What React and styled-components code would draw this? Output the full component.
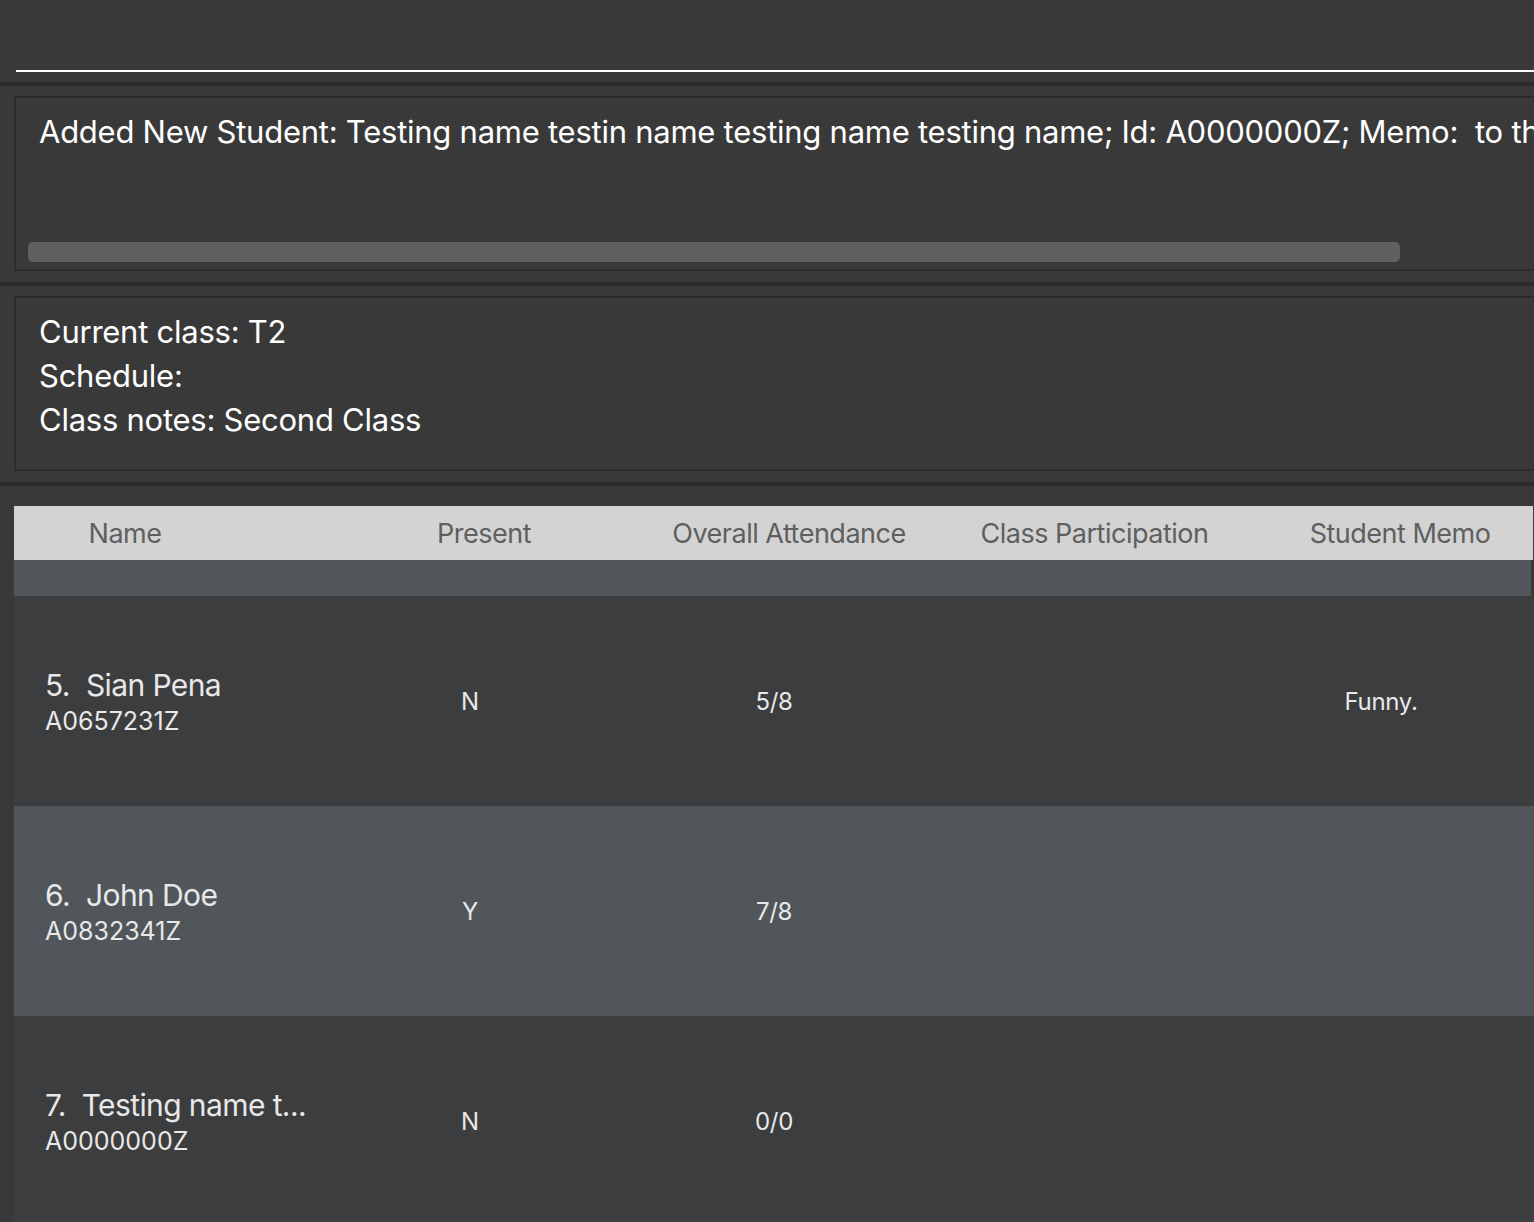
import React from 'react';
import styled, { createGlobalStyle } from 'styled-components';

const GlobalStyle = createGlobalStyle`
  html, body {
    margin: 0;
    padding: 0;
    background: #393939;
    overflow: hidden;
  }
  body {
    font-family: Inter, "Noto Sans", sans-serif;
  }
`;

// column tracks shared by header and rows
const TRACKS = '316px 280px 328px 293px 300px';

const COLUMNS = [
  { title: 'Name', shift: -47 },
  { title: 'Present', shift: 14 },
  { title: 'Overall Attendance', shift: 15 },
  { title: 'Class Participation', shift: 10 },
  { title: 'Student Memo', shift: 19 },
];

const STUDENTS = [
  { index: 5, name: 'Sian Pena', id: 'A0657231Z', present: 'N', attendance: '5/8', memo: 'Funny.' },
  { index: 6, name: 'John Doe', id: 'A0832341Z', present: 'Y', attendance: '7/8', memo: '' },
  { index: 7, name: 'Testing name t...', id: 'A0000000Z', present: 'N', attendance: '0/0', memo: '' },
];

const Window = styled.div`
  width: 1534px;
  height: 1222px;
  overflow: hidden;
  background: #393939;
  display: flex;
  flex-direction: column;
  & > * {
    flex-shrink: 0;
  }
`;

const CommandBar = styled.div`
  height: 82px;
  padding-left: 16px;
  box-sizing: border-box;
`;

const CommandInput = styled.div`
  height: 72px;
  border-bottom: 2px solid #ffffff;
  box-sizing: border-box;
`;

const Pane = styled.section`
  border-top: 4px solid #2b2b2b;
  padding: 10px 0 11px 14px;
`;

const Box = styled.div`
  height: 175px;
  box-sizing: border-box;
  border: 2px solid #2b2b2b;
  border-right: none;
  padding: 12px 0 0 23px;
  position: relative;
  overflow: hidden;
  color: #ffffff;
  font-size: 31px;
  letter-spacing: -0.25px;
  line-height: 44px;
`;

const Line = styled.div`
  white-space: nowrap;
`;

const ScrollThumb = styled.div`
  position: absolute;
  left: 12px;
  top: 144px;
  width: 1372px;
  height: 20px;
  border-radius: 5px;
  background: #606060;
`;

const TablePane = styled.section`
  border-top: 4px solid #2b2b2b;
  padding: 20px 0 0 14px;
  flex: 1;
  display: flex;
  flex-direction: column;
`;

const Header = styled.div`
  display: grid;
  grid-template-columns: ${TRACKS};
  height: 54px;
  flex-shrink: 0;
  background: #d3d3d3;
  align-items: center;
  margin-right: 1px;
`;

const HeaderCell = styled.div`
  text-align: center;
  white-space: nowrap;
  color: #5f5f5f;
  font-size: 27px;
  letter-spacing: -0.5px;
  transform: translateX(${(p) => p.$shift}px);
`;

const Row = styled.div`
  display: grid;
  grid-template-columns: ${TRACKS};
  height: ${(p) => p.$height}px;
  flex-shrink: 0;
  background: ${(p) => (p.$alt ? '#50565a' : '#3c3d3f')};
  align-items: center;
  margin-right: ${(p) => (p.$inset ? 3 : 0)}px;
`;

const NameCell = styled.div`
  padding: 4px 0 0 31px;
  display: flex;
  flex-direction: column;
  color: #e8e8e8;
  white-space: nowrap;
`;

const NameLine = styled.div`
  display: flex;
  gap: 16px;
  font-size: 30px;
  letter-spacing: -0.6px;
  line-height: 36px;
`;

const IdLine = styled.div`
  font-size: 25px;
  letter-spacing: 0;
  line-height: 36px;
`;

const Cell = styled.div`
  text-align: center;
  color: #e8e8e8;
  font-size: 24px;
  letter-spacing: -0.3px;
`;

export default function App() {
  return (
    <Window>
      <GlobalStyle />
      <CommandBar>
        <CommandInput />
      </CommandBar>
      <Pane>
        <Box>
          <Line>
            Added New Student: Testing name testin name testing name testing name; Id: A0000000Z; Memo:&nbsp; to the
          </Line>
          <ScrollThumb />
        </Box>
      </Pane>
      <Pane>
        <Box>
          <Line>Current class: T2</Line>
          <Line>Schedule:</Line>
          <Line>Class notes: Second Class</Line>
        </Box>
      </Pane>
      <TablePane>
        <Header>
          {COLUMNS.map((c) => (
            <HeaderCell key={c.title} $shift={c.shift}>
              {c.title}
            </HeaderCell>
          ))}
        </Header>
        <Row $height={36} $alt $inset />
        {STUDENTS.map((s, i) => (
          <Row key={s.id} $height={210} $alt={i % 2 === 1}>
            <NameCell>
              <NameLine>
                <span>{s.index}.</span>
                <span>{s.name}</span>
              </NameLine>
              <IdLine>{s.id}</IdLine>
            </NameCell>
            <Cell>{s.present}</Cell>
            <Cell>{s.attendance}</Cell>
            <Cell />
            <Cell>{s.memo}</Cell>
          </Row>
        ))}
      </TablePane>
    </Window>
  );
}
